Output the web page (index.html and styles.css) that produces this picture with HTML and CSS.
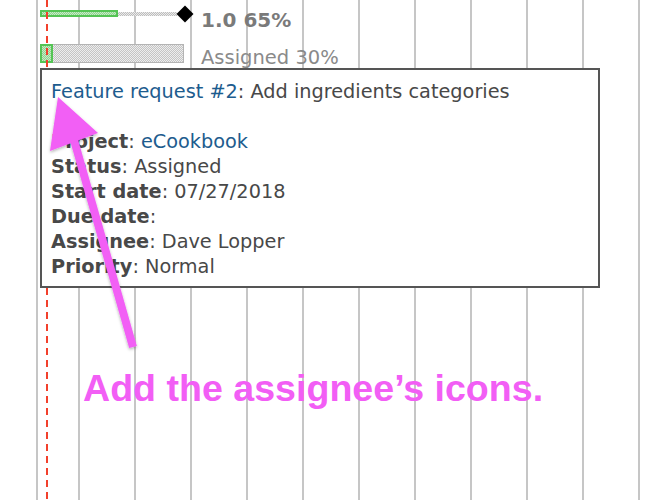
FILE: index.html
```html
<!DOCTYPE html>
<html>
<head>
<meta charset="utf-8">
<link rel="stylesheet" href="styles.css">
</head>
<body>
<div class="page">
  <div class="chart">
    <div class="row row-first">
      <div class="bar bar-done" style="width:78px"></div>
      <div class="bar-todo-thin" style="width:59px"></div>
      <div class="milestone"></div>
      <div class="label label-strong">1.0 65%</div>
    </div>
    <div class="row row-second">
      <div class="bar bar-done bar-tall" style="width:13px"></div>
      <div class="bar bar-todo bar-tall" style="width:131px"></div>
      <div class="label label-status">Assigned 30%</div>
    </div>
  </div>

  <div class="today-line"></div>

  <div class="tooltip">
    <div class="tip-line"><a class="link" href="#">Feature request #2</a>: Add ingredients categories</div>
    <div class="tip-line">&nbsp;</div>
    <div class="tip-line"><strong>Project</strong>: <a class="link" href="#">eCookbook</a></div>
    <div class="tip-line"><strong>Status</strong>: Assigned</div>
    <div class="tip-line"><strong>Start date</strong>: 07/27/2018</div>
    <div class="tip-line"><strong>Due date</strong>:</div>
    <div class="tip-line"><strong>Assignee</strong>: Dave Lopper</div>
    <div class="tip-line"><strong>Priority</strong>: Normal</div>
  </div>

  <svg class="arrow" width="654" height="500" viewBox="0 0 654 500">
    <defs>
      <filter id="sh" x="-20%" y="-20%" width="140%" height="140%">
        <feDropShadow dx="0" dy="1.5" stdDeviation="1.5" flood-color="#000" flood-opacity="0.3"/>
      </filter>
    </defs>
    <g filter="url(#sh)" fill="#f25ef5" stroke="#f25ef5">
      <line x1="74" y1="140" x2="133" y2="347" stroke-width="8" stroke-linecap="butt"/>
      <polygon points="58,97 50,151 98,133" stroke="none"/>
    </g>
  </svg>

  <div class="note">Add the assignee’s icons.</div>
</div>
</body>
</html>
```

FILE: styles.css
```css
html, body {
  margin: 0;
  padding: 0;
  background: #fff;
}

.page {
  position: relative;
  width: 654px;
  height: 500px;
  overflow: hidden;
  font-family: "DejaVu Sans", Verdana, sans-serif;
}

.chart {
  margin-left: 36px;
  border-left: 2px solid #c6c6c6;
  height: 500px;
  box-sizing: border-box;
  padding-left: 2px;
  background-image: linear-gradient(to right, #c6c6c6 0, #c6c6c6 2px, transparent 2px);
  background-size: 56px 100%;
  background-position: 40px 0;
  background-repeat: repeat-x;
}

.row {
  display: flex;
  align-items: flex-start;
}

.row-first {
  height: 39px;
}

.row-second {
  height: 40px;
}

.bar {
  box-sizing: border-box;
  flex: none;
}

.bar-done {
  margin-top: 10px;
  height: 7px;
  border: 2px solid #55c455;
  background-color: #a8dea8;
  background-image: repeating-conic-gradient(#8fd28f 0 25%, #c6ebc6 0 50%);
  background-size: 2px 2px;
}

.bar-todo-thin {
  flex: none;
  margin-top: 12px;
  height: 4px;
  background-image: repeating-conic-gradient(#bdbdbd 0 25%, #ebebeb 0 50%);
  background-size: 2px 2px;
}

.bar-tall {
  margin-top: 5px;
  height: 19px;
}

.bar-todo {
  border: 1.5px solid #b4b4b4;
  border-left: none;
  background-image: repeating-conic-gradient(#c4c4c4 0 25%, #ededed 0 50%);
  background-size: 2px 2px;
}

.milestone {
  flex: none;
  width: 12px;
  height: 12px;
  margin-top: 8px;
  margin-left: 1.5px;
  background: #000;
  transform: rotate(45deg);
}

.label {
  flex: none;
  line-height: 20px;
  white-space: nowrap;
}

.label-strong {
  margin-left: 10.5px;
  margin-top: 9.8px;
  font-size: 20px;
  font-weight: bold;
  color: #7a7a7a;
}

.label-status {
  margin-left: 17px;
  margin-top: 8.6px;
  font-size: 19.5px;
  color: #8a8a8a;
}

.today-line {
  position: absolute;
  left: 46px;
  top: 0;
  width: 2px;
  height: 500px;
  background-image: repeating-linear-gradient(to bottom, #f2402c 0, #f2402c 7px, transparent 7px, transparent 12px);
}

.tooltip {
  position: absolute;
  left: 40px;
  top: 68px;
  width: 560px;
  height: 220px;
  box-sizing: border-box;
  border: 2px solid #555;
  background: #fff;
  padding: 9px 8px 0 9px;
  font-size: 19.3px;
  line-height: 25px;
  color: #484848;
}

.tip-line {
  white-space: nowrap;
}

.tip-line strong {
  font-weight: bold;
}

.link {
  color: #1d5c8e;
  text-decoration: none;
}

.arrow {
  position: absolute;
  left: 0;
  top: 0;
}

.note {
  position: absolute;
  left: 83px;
  top: 366px;
  font-family: "Liberation Sans", Arial, sans-serif;
  font-weight: bold;
  font-size: 37.6px;
  line-height: 44px;
  color: #f25ef5;
  white-space: nowrap;
}
```
